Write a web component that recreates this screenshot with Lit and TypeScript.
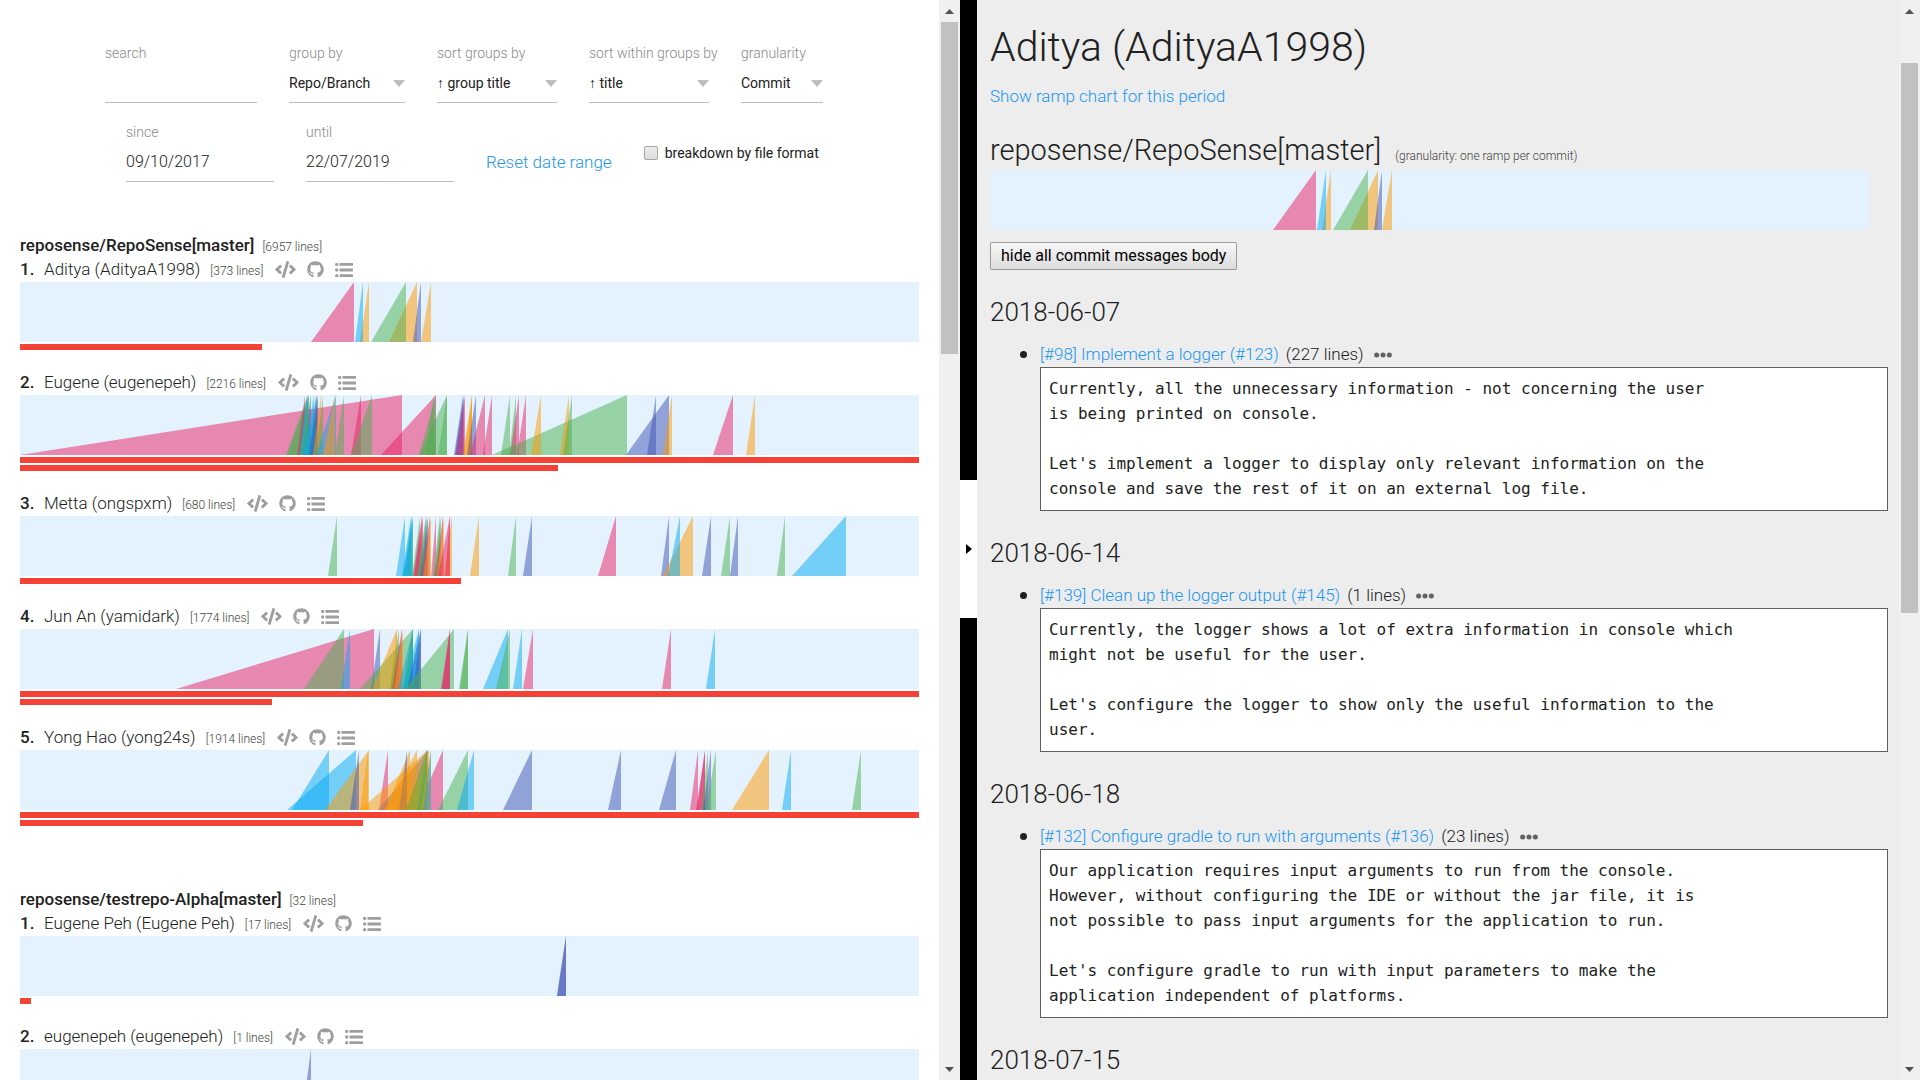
import { LitElement, html, css, svg, nothing } from "lit";
import { customElement, property } from "lit/decorators.js";

type Hue = "P" | "B" | "O" | "G" | "I";
type Ramp = [Hue, number, number];

interface Author {
  name: string;
  lines: number;
  ramps: Ramp[];
  bars: number[];
}

interface Group {
  title: string;
  lines: number;
  authors: Author[];
}

interface Commit {
  date: string;
  title?: string;
  lines?: number;
  body?: string;
}

interface Choice {
  id: string;
  label: string;
  value: string;
  width: string;
}

/* Parses "P291-334 B335-343" into ramp tuples: hue, start and end on the time axis. */
const parseRamps = (source: string): Ramp[] =>
  source
    .trim()
    .split(/\s+/)
    .map((item) => {
      const [from, to] = item.slice(1).split("-").map(Number);
      return [item[0] as Hue, from, to];
    });

const GROUPS: Group[] = [
  {
    title: "reposense/RepoSense[master]",
    lines: 6957,
    authors: [
      {
        name: "Aditya (AdityaA1998)",
        lines: 373,
        ramps: parseRamps("P291-334 O340-349 B335-343 O369-397 G351-386 I393-401 O401-411"),
        bars: [242],
      },
      {
        name: "Eugene (eugenepeh)",
        lines: 2216,
        ramps: parseRamps(
          "P0-382 G266-288 G267-289 P277-285 I282-291 I288-297 B279-287 B280-288 G280-289 B284-294 G288-297 B286-296 I289-298 O293-301 G296-303 B296-316 O303-315 G315-324 P331-341 G331-352 P361-416 G399-416 G405-414 G399-427 G418-427 I434-443 I435-444 P436-445 O443-452 O444-452 O448-452 I447-456 P450-465 P463-472 G481-490 G489-496 P490-499 P497-506 G472-607 O511-521 O540-549 G543-552 I606-649 I627-636 O643-652 P693-713 O726-735",
        ),
        bars: [899, 538],
      },
      {
        name: "Metta (ongspxm)",
        lines: 680,
        ramps: parseRamps(
          "G308-317 B376-385 B382-391 B384-393 G385-393 B383-392 G392-400 P393-402 P394-403 G397-406 G398-407 I400-408 P402-410 O403-411 P411-416 G413-420 G414-421 P415-423 O417-424 P418-430 O424-432 P425-430 O450-459 G488-496 I503-512 P578-596 I641-649 O643-673 B648-660 I682-691 G701-710 I710-718 G757-765 B772-826",
        ),
        bars: [441],
      },
      {
        name: "Jun An (yamidark)",
        lines: 1774,
        ramps: parseRamps(
          "P156-354 G284-324 B321-330 I351-360 G340-393 O352-377 O370-377 G370-379 P372-382 O374-383 B378-393 B383-393 G383-393 B383-399 I387-401 B391-399 I393-401 G385-434 P421-430 P422-430 G439-448 G440-448 B463-488 G476-490 B493-502 P503-513 P642-651 B686-695",
        ),
        bars: [899, 252],
      },
      {
        name: "Yong Hao (yong24s)",
        lines: 1914,
        ramps: parseRamps(
          "B267-336 B272-309 O305-349 I330-339 O340-348 P359-368 P397-423 I358-408 O340-408 O365-390 I379-387 O365-397 O386-409 G386-407 G397-407 O401-411 B403-411 G418-448 B437-454 I483-512 I588-601 I639-656 P670-678 P676-685 P677-685 G681-688 I683-691 G686-696 O712-749 B762-771 G832-841",
        ),
        bars: [899, 343],
      },
    ],
  },
  {
    title: "reposense/testrepo-Alpha[master]",
    lines: 32,
    authors: [
      {
        name: "Eugene Peh (Eugene Peh)",
        lines: 17,
        ramps: parseRamps("I537-546 I537-546"),
        bars: [11],
      },
      {
        name: "eugenepeh (eugenepeh)",
        lines: 1,
        ramps: parseRamps("I283-291"),
        bars: [1],
      },
    ],
  },
];

const DETAIL_RAMPS = parseRamps("P283-326 O332-341 B327-336 O360-388 G343-378 I384-392 O392-402");

const COMMITS: Commit[] = [
  {
    date: "2018-06-07",
    title: "[#98] Implement a logger (#123)",
    lines: 227,
    body: `Currently, all the unnecessary information - not concerning the user
is being printed on console.

Let's implement a logger to display only relevant information on the
console and save the rest of it on an external log file.`,
  },
  {
    date: "2018-06-14",
    title: "[#139] Clean up the logger output (#145)",
    lines: 1,
    body: `Currently, the logger shows a lot of extra information in console which
might not be useful for the user.

Let's configure the logger to show only the useful information to the
user.`,
  },
  {
    date: "2018-06-18",
    title: "[#132] Configure gradle to run with arguments (#136)",
    lines: 23,
    body: `Our application requires input arguments to run from the console.
However, without configuring the IDE or without the jar file, it is
not possible to pass input arguments for the application to run.

Let's configure gradle to run with input parameters to make the
application independent of platforms.`,
  },
  { date: "2018-07-15" },
];

const CHOICES: Choice[] = [
  { id: "group-by", label: "group by", value: "Repo/Branch", width: "w-mid" },
  { id: "sort-groups", label: "sort groups by", value: "↑ group title", width: "w-wide" },
  { id: "sort-within", label: "sort within groups by", value: "↑ title", width: "w-wide" },
  { id: "granularity", label: "granularity", value: "Commit", width: "w-small" },
];

@customElement("ramp-chart")
export class RampChart extends LitElement {
  @property({ attribute: false }) ramps: Ramp[] = [];
  @property({ type: Number }) span = 899;

  static styles = css`
    :host {
      display: block;
      height: 60px;
      background: #e3f2fd;
      overflow: hidden;
    }
    svg {
      display: block;
      width: 100%;
      height: 100%;
    }
    polygon {
      opacity: 0.5;
    }
    .P { fill: #e91e63; }
    .B { fill: #03a9f4; }
    .O { fill: #ff9800; }
    .G { fill: #4caf50; }
    .I { fill: #3f51b5; }
  `;

  render() {
    return html`<svg viewBox="0 0 ${this.span} 60" preserveAspectRatio="none" aria-hidden="true">
      ${this.ramps.map(
        ([hue, from, to]) => svg`<polygon class=${hue} points="${from},60 ${to},60 ${to},0"></polygon>`,
      )}
    </svg>`;
  }
}

@customElement("scroll-track")
export class ScrollTrack extends LitElement {
  @property({ type: Number }) offset = 0;
  @property({ type: Number }) length = 30;

  static styles = css`
    :host {
      flex: 0 0 21px;
      display: flex;
      flex-direction: column;
      background: #f0f0f0;
    }
    .cap {
      height: 22px;
      display: grid;
      place-items: center;
    }
    .cap svg {
      display: block;
      fill: #505050;
    }
    .lane {
      flex: 1;
      min-height: 0;
      padding: 0 2px;
      display: flex;
      flex-direction: column;
    }
    .thumb {
      background: #c1c1c1;
    }
  `;

  render() {
    return html`
      <div class="cap"><svg width="9" height="5" viewBox="0 0 9 5"><path d="M0 5 4.5 0 9 5z" /></svg></div>
      <div class="lane">
        <div style="height:${this.offset}%"></div>
        <div class="thumb" style="height:${this.length}%"></div>
      </div>
      <div class="cap"><svg width="9" height="5" viewBox="0 0 9 5"><path d="M0 0 4.5 5 9 0z" /></svg></div>
    `;
  }
}

const codeIcon = html`<svg width="21" height="17" viewBox="0 0 640 512" aria-hidden="true">
  <path d="M278.9 511.5l-61-17.7c-6.4-1.8-10-8.5-8.2-14.9L346.2 8.7c1.8-6.4 8.5-10 14.9-8.2l61 17.7c6.4 1.8 10 8.5 8.2 14.9L293.8 503.3c-1.9 6.4-8.5 10.1-14.9 8.2zm-114-112.2l43.5-46.4c4.6-4.9 4.3-12.7-.8-17.2L117 256l90.6-79.7c5.1-4.5 5.5-12.3.8-17.2l-43.5-46.4c-4.5-4.8-12.1-5.1-17-.5L3.8 247.2c-5.1 4.7-5.1 12.8 0 17.5l144.1 135.1c4.9 4.6 12.5 4.4 17-.5zm327.2.6l144.1-135.1c5.1-4.7 5.1-12.8 0-17.5L492.1 112.1c-4.8-4.5-12.4-4.3-17 .5L431.6 159c-4.6 4.9-4.3 12.7.8 17.2L523 256l-90.6 79.7c-5.1 4.5-5.5 12.3-.8 17.2l43.5 46.4c4.5 4.9 12.1 5.1 17 .6z" />
</svg>`;

const githubIcon = html`<svg width="17" height="17" viewBox="0 0 496 512" aria-hidden="true">
  <path d="M165.9 397.4c0 2-2.3 3.6-5.2 3.6-3.3.3-5.6-1.3-5.6-3.6 0-2 2.3-3.6 5.2-3.6 3-.3 5.6 1.3 5.6 3.6zm-31.1-4.5c-.7 2 1.3 4.3 4.3 4.9 2.6 1 5.6 0 6.2-2s-1.3-4.3-4.3-5.2c-2.6-.7-5.5.3-6.2 2.3zm44.2-1.7c-2.9.7-4.9 2.6-4.6 4.9.3 2 2.9 3.3 5.9 2.6 2.9-.7 4.9-2.6 4.6-4.6-.3-1.9-3-3.2-5.9-2.9zM244.8 8C106.1 8 0 113.3 0 252c0 110.9 69.8 205.8 169.5 239.2 12.8 2.3 17.3-5.6 17.3-12.1 0-6.2-.3-40.4-.3-61.4 0 0-70 15-84.7-29.8 0 0-11.4-29.1-27.8-36.6 0 0-22.9-15.7 1.6-15.4 0 0 24.9 2 38.6 25.8 21.9 38.6 58.6 27.5 72.9 20.9 2.3-16 8.8-27.1 16-33.7-55.9-6.2-112.3-14.3-112.3-110.5 0-27.5 7.6-41.3 23.6-58.9-2.6-6.5-11.1-33.3 2.6-67.9 20.9-6.5 69 27 69 27 20-5.6 41.5-8.5 62.8-8.5s42.8 2.9 62.8 8.5c0 0 48.1-33.6 69-27 13.7 34.7 5.2 61.4 2.6 67.9 16 17.7 25.8 31.5 25.8 58.9 0 96.5-58.9 104.2-114.8 110.5 9.2 7.9 17 22.9 17 46.4 0 33.7-.3 75.4-.3 83.6 0 6.5 4.6 14.4 17.3 12.1C428.2 457.8 496 362.9 496 252 496 113.3 383.5 8 244.8 8z" />
</svg>`;

const listIcon = html`<svg width="18" height="18" viewBox="0 0 512 512" aria-hidden="true">
  <circle cx="48" cy="96" r="48" />
  <circle cx="48" cy="256" r="48" />
  <circle cx="48" cy="416" r="48" />
  <rect x="128" y="56" width="384" height="80" rx="16" />
  <rect x="128" y="216" width="384" height="80" rx="16" />
  <rect x="128" y="376" width="384" height="80" rx="16" />
</svg>`;

const dotsIcon = html`<svg width="18" height="18" viewBox="0 0 512 512" aria-hidden="true">
  <circle cx="76" cy="256" r="72" />
  <circle cx="256" cy="256" r="72" />
  <circle cx="436" cy="256" r="72" />
</svg>`;

@customElement("app-root")
export class AppRoot extends LitElement {
  static styles = css`
    :host {
      display: flex;
      height: 100vh;
      overflow: hidden;
      background: #fff;
      color: #212121;
      font: 300 17px/25px Roboto, "Liberation Sans", sans-serif;
    }
    * {
      box-sizing: border-box;
    }
    a {
      color: #2196f3;
      text-decoration: none;
    }
    h1, h2, h3, ul, ol, pre {
      margin: 0;
      padding: 0;
      font-weight: inherit;
    }
    input, select, button {
      font: inherit;
      color: inherit;
      margin: 0;
    }

    .summary {
      flex: 0 0 50%;
      min-width: 0;
      display: flex;
    }
    .summary-body {
      flex: 1;
      min-width: 0;
      padding: 43px 20px 0;
    }
    .filters {
      display: flex;
      flex-direction: column;
      gap: 19px;
      padding-left: 85px;
      margin-bottom: 50px;
    }
    .filter-row {
      display: flex;
      gap: 32px;
    }
    .filter-row.dates {
      padding-left: 21px;
    }
    .field {
      display: flex;
      flex-direction: column;
      line-height: 20px;
    }
    .field label {
      color: #8a8a8a;
      white-space: nowrap;
      font-size: 14px;
    }
    .w-search { width: 152px; }
    .w-date { width: 148px; }
    .w-mid { width: 116px; }
    .w-wide { width: 120px; }
    .w-small { width: 82px; }
    .field input,
    .field select {
      width: 100%;
      height: 40px;
      padding: 0;
      border: 0;
      border-bottom: 1px solid #bdbdbd;
      border-radius: 0;
      background: none;
      appearance: none;
      outline: none;
      font-size: 16px;
    }
    .field select {
      grid-area: 1 / 1;
      font-size: 14px;
      font-weight: 400;
    }
    .pick {
      display: grid;
      align-items: center;
    }
    .pick svg {
      grid-area: 1 / 1;
      justify-self: end;
      pointer-events: none;
      fill: #bdbdbd;
    }
    .reset {
      align-self: flex-end;
      line-height: 40px;
      white-space: nowrap;
    }
    .breakdown {
      display: flex;
      align-items: center;
      gap: 7px;
      padding-top: 2px;
      font-size: 14px;
      font-weight: 400;
      white-space: nowrap;
    }
    .breakdown input {
      appearance: none;
      width: 14px;
      height: 14px;
      border: 1px solid #a6a6a6;
      border-radius: 2px;
      background: linear-gradient(#eee, #dcdcdc);
    }

    .group {
      margin-bottom: 60px;
    }
    .group-title {
      display: flex;
      align-items: baseline;
      gap: 8px;
      height: 25px;
      font-size: 17px;
      font-weight: 500;
      line-height: 27px;
    }
    .count {
      font-size: 12px;
      font-weight: 300;
      color: #424242;
    }
    .authors {
      list-style: none;
    }
    .author {
      margin-bottom: 20px;
    }
    .author-title {
      display: flex;
      align-items: center;
      height: 25px;
    }
    .author-text {
      display: flex;
      align-items: baseline;
      height: 25px;
    }
    .index {
      width: 24px;
      font-weight: 500;
    }
    .author-name {
      margin-right: 10px;
    }
    .author-links {
      display: flex;
      align-items: center;
      gap: 11px;
      margin-left: 12px;
    }
    .author-links a {
      display: block;
      height: 18px;
    }
    .author-links svg {
      display: block;
      fill: #9e9e9e;
    }
    .bar {
      height: 6px;
      margin-top: 2px;
      background: #f44336;
    }

    .divider {
      flex: 0 0 17px;
      display: flex;
      align-items: center;
      padding-top: 18px;
      background: #000;
    }
    .handle {
      width: 100%;
      height: 138px;
      padding: 0;
      border: 0;
      display: grid;
      place-items: center;
      background: #fff;
    }

    .detail {
      flex: 1;
      min-width: 0;
      display: flex;
      background: #ededed;
    }
    .detail-body {
      flex: 1;
      min-width: 0;
      padding: 22px 11px 0 13px;
    }
    .detail h1 {
      font-size: 41px;
      line-height: 50px;
      margin-bottom: 12px;
    }
    .detail h2 {
      display: flex;
      align-items: baseline;
      gap: 14px;
      height: 36px;
      font-size: 29px;
      line-height: 36px;
      margin: 23px 0 2px;
    }
    .detail h2 small {
      font-size: 12px;
      line-height: 20px;
      color: #424242;
    }
    .detail h3 {
      font-size: 26px;
      line-height: 30px;
      margin: 27px 0 15px;
    }
    .detail ramp-chart {
      margin-right: 19px;
    }
    .toggle {
      display: block;
      height: 28px;
      margin-top: 12px;
      padding: 0 10px;
      border: 1px solid #9c9c9c;
      border-radius: 1px;
      background: linear-gradient(#f7f7f7, #dcdcdc);
      color: #000;
      font-size: 16px;
      font-weight: 400;
      line-height: 24px;
    }
    .commits {
      padding-left: 50px;
      list-style: none;
    }
    .commit-line {
      display: flex;
      align-items: center;
      gap: 7px;
      height: 25px;
    }
    .commit-line::before {
      content: "";
      width: 7px;
      height: 7px;
      margin: 0 6px 0 -20px;
      border-radius: 50%;
      background: #212121;
    }
    .commit-line button {
      border: 0;
      padding: 0;
      margin-left: 3px;
      background: none;
    }
    .commit-line svg {
      display: block;
      fill: #616161;
    }
    .message {
      padding: 8px 8px 9px;
      border: 1px solid #616161;
      background: #fff;
      font: 400 16px/25px "DejaVu Sans Mono", "Liberation Mono", monospace;
      white-space: pre-wrap;
    }
  `;

  private renderFilters() {
    return html`
      <form class="filters">
        <div class="filter-row">
          <div class="field w-search">
            <label for="search">search</label>
            <input id="search" type="text" />
          </div>
          ${CHOICES.map(
            (choice) => html`
              <div class="field ${choice.width}">
                <label for=${choice.id}>${choice.label}</label>
                <div class="pick">
                  <select id=${choice.id}>
                    <option>${choice.value}</option>
                  </select>
                  <svg width="12" height="7" viewBox="0 0 12 7" aria-hidden="true"><path d="M0 0h12L6 7z" /></svg>
                </div>
              </div>
            `,
          )}
        </div>
        <div class="filter-row dates">
          <div class="field w-date">
            <label for="since">since</label>
            <input id="since" type="text" value="09/10/2017" />
          </div>
          <div class="field w-date">
            <label for="until">until</label>
            <input id="until" type="text" value="22/07/2019" />
          </div>
          <a class="reset" href="#reset">Reset date range</a>
          <label class="breakdown"><input type="checkbox" />breakdown by file format</label>
        </div>
      </form>
    `;
  }

  private renderAuthor(author: Author, index: number) {
    return html`
      <li class="author">
        <div class="author-title">
          <div class="author-text">
            <span class="index">${index + 1}.</span>
            <span class="author-name">${author.name}</span>
            <span class="count">[${author.lines} lines]</span>
          </div>
          <div class="author-links">
            <a href="#code" aria-label="Code">${codeIcon}</a>
            <a href="#repo" aria-label="Repository">${githubIcon}</a>
            <a href="#commits" aria-label="Commits">${listIcon}</a>
          </div>
        </div>
        <ramp-chart .ramps=${author.ramps}></ramp-chart>
        ${author.bars.map((width) => html`<div class="bar" style="width:${(width / 899) * 100}%"></div>`)}
      </li>
    `;
  }

  private renderCommit(commit: Commit) {
    return html`
      <h3>${commit.date}</h3>
      ${commit.title
        ? html`<ul class="commits">
            <li>
              <div class="commit-line">
                <a href="#commit">${commit.title}</a>
                <span>(${commit.lines} lines)</span>
                <button type="button" aria-label="Toggle message">${dotsIcon}</button>
              </div>
              <pre class="message">${commit.body}</pre>
            </li>
          </ul>`
        : nothing}
    `;
  }

  render() {
    return html`
      <section class="summary">
        <div class="summary-body">
          ${this.renderFilters()}
          ${GROUPS.map(
            (group) => html`
              <section class="group">
                <h2 class="group-title">${group.title}<span class="count">[${group.lines} lines]</span></h2>
                <ol class="authors">
                  ${group.authors.map((author, index) => this.renderAuthor(author, index))}
                </ol>
              </section>
            `,
          )}
        </div>
        <scroll-track offset="0" length="32"></scroll-track>
      </section>
      <div class="divider">
        <button class="handle" type="button" aria-label="Collapse panel">
          <svg width="6" height="10" viewBox="0 0 6 10"><path d="M0 0 6 5 0 10z" /></svg>
        </button>
      </div>
      <section class="detail">
        <div class="detail-body">
          <h1>Aditya (AdityaA1998)</h1>
          <a href="#ramp">Show ramp chart for this period</a>
          <h2>reposense/RepoSense[master] <small>(granularity: one ramp per commit)</small></h2>
          <ramp-chart span="879" .ramps=${DETAIL_RAMPS}></ramp-chart>
          <button class="toggle" type="button">hide all commit messages body</button>
          ${COMMITS.map((commit) => this.renderCommit(commit))}
        </div>
        <scroll-track offset="4" length="53"></scroll-track>
      </section>
    `;
  }
}
